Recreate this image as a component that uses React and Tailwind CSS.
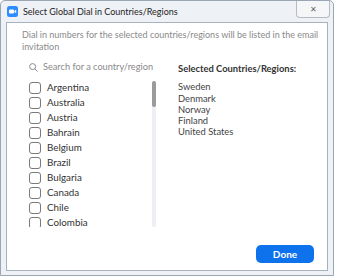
import React from "react";

const countries = ["Argentina", "Australia", "Austria", "Bahrain", "Belgium", "Brazil", "Bulgaria", "Canada", "Chile", "Colombia"];
const selected = ["Sweden", "Denmark", "Norway", "Finland", "United States"];

const ZoomIcon = () => (
    <svg width="11" height="11" viewBox="0 0 11 11">
        <rect x="0" y="0" width="11" height="11" rx="2.5" fill="#2d8cff" />
        <rect x="2" y="3.5" width="5" height="4" rx="1" fill="#fff" />
        <path d="M7.3 5 L9.2 3.8 L9.2 7.2 L7.3 6 Z" fill="#fff" />
    </svg>
);

const SearchIcon = () => (
    <svg width="9" height="9" viewBox="0 0 9 9" fill="none" stroke="#8a8a8a" strokeWidth="1">
        <circle cx="3.6" cy="3.6" r="3" />
        <path d="M5.8 5.8 L8.5 8.5" />
    </svg>
);

export default function App() {
    return (
        <div className="w-[337px] h-[277px] bg-white overflow-hidden" style={{ fontFamily: 'Lato, "Noto Sans", sans-serif' }}>
            <div className="w-[334px] h-[276px] flex flex-col bg-[#eef1f5] border border-[#9aa6b4] rounded-t-[5px] px-[5px] pb-[4px]">
                <div className="h-[21px] flex items-start shrink-0">
                    <div className="flex items-center gap-[5px] pt-[5px] pl-[1px]">
                        <ZoomIcon />
                        <span className="text-[9px] text-[#1e1e1e] leading-none">Select Global Dial in Countries/Regions</span>
                    </div>
                    <div className="ml-auto w-[34px] h-[17px] border border-[#b4bcc6] border-t-0 rounded-b-[4px] bg-[#f4f6f8] flex items-center justify-center text-[8px] text-[#666] leading-none -mr-[2px]">
                        ✕
                    </div>
                </div>
                <div className="flex-1 bg-white border border-[#a8b2bd] flex flex-col">
                    <p className="text-[#8a8a8a] pl-[15px] pr-[6px] pt-[6px] leading-[12px] text-[9px]">
                        Dial in numbers for the selected countries/regions will be listed in the email invitation
                    </p>
                    <div className="flex mt-[8px]">
                        <div className="w-[150px] pl-[22px]">
                            <div className="flex items-center gap-[5px] h-[12px]">
                                <SearchIcon />
                                <span className="text-[#8a8a8a] text-[9.2px] leading-none">Search for a country/region</span>
                            </div>
                            <div className="flex mt-[7px]">
                                <div className="flex-1 h-[147px] overflow-hidden">
                                    {countries.map((c) => (
                                        <div key={c} className="h-[15px] flex items-center gap-[6px]">
                                            <div className="w-[12px] h-[12px] border border-[#7a7a7a] rounded-[3px] shrink-0" />
                                            <span className="text-[#333] text-[9.8px] leading-none">{c}</span>
                                        </div>
                                    ))}
                                </div>
                                <div className="w-[4px] h-[146px] bg-[#eeeef6] rounded-full mr-[1px] mt-[1px]">
                                    <div className="h-[26px] bg-[#9b9b9b] rounded-full" />
                                </div>
                            </div>
                        </div>
                        <div className="pl-[21px]">
                            <div className="font-bold text-[#333] text-[9.4px] leading-none pt-[3px]">Selected Countries/Regions:</div>
                            <div className="mt-[8px]">
                                {selected.map((s) => (
                                    <div key={s} className="h-[11.25px] leading-[11.25px] text-[#444] text-[9.4px]">{s}</div>
                                ))}
                            </div>
                        </div>
                    </div>
                    <div className="flex-1" />
                    <div className="flex justify-end pr-[13px] pb-[7px]">
                        <div className="w-[58px] h-[18px] bg-[#0e72ed] rounded-[5px] text-white font-bold text-[10px] flex items-center justify-center">Done</div>
                    </div>
                </div>
            </div>
        </div>
    );
}
